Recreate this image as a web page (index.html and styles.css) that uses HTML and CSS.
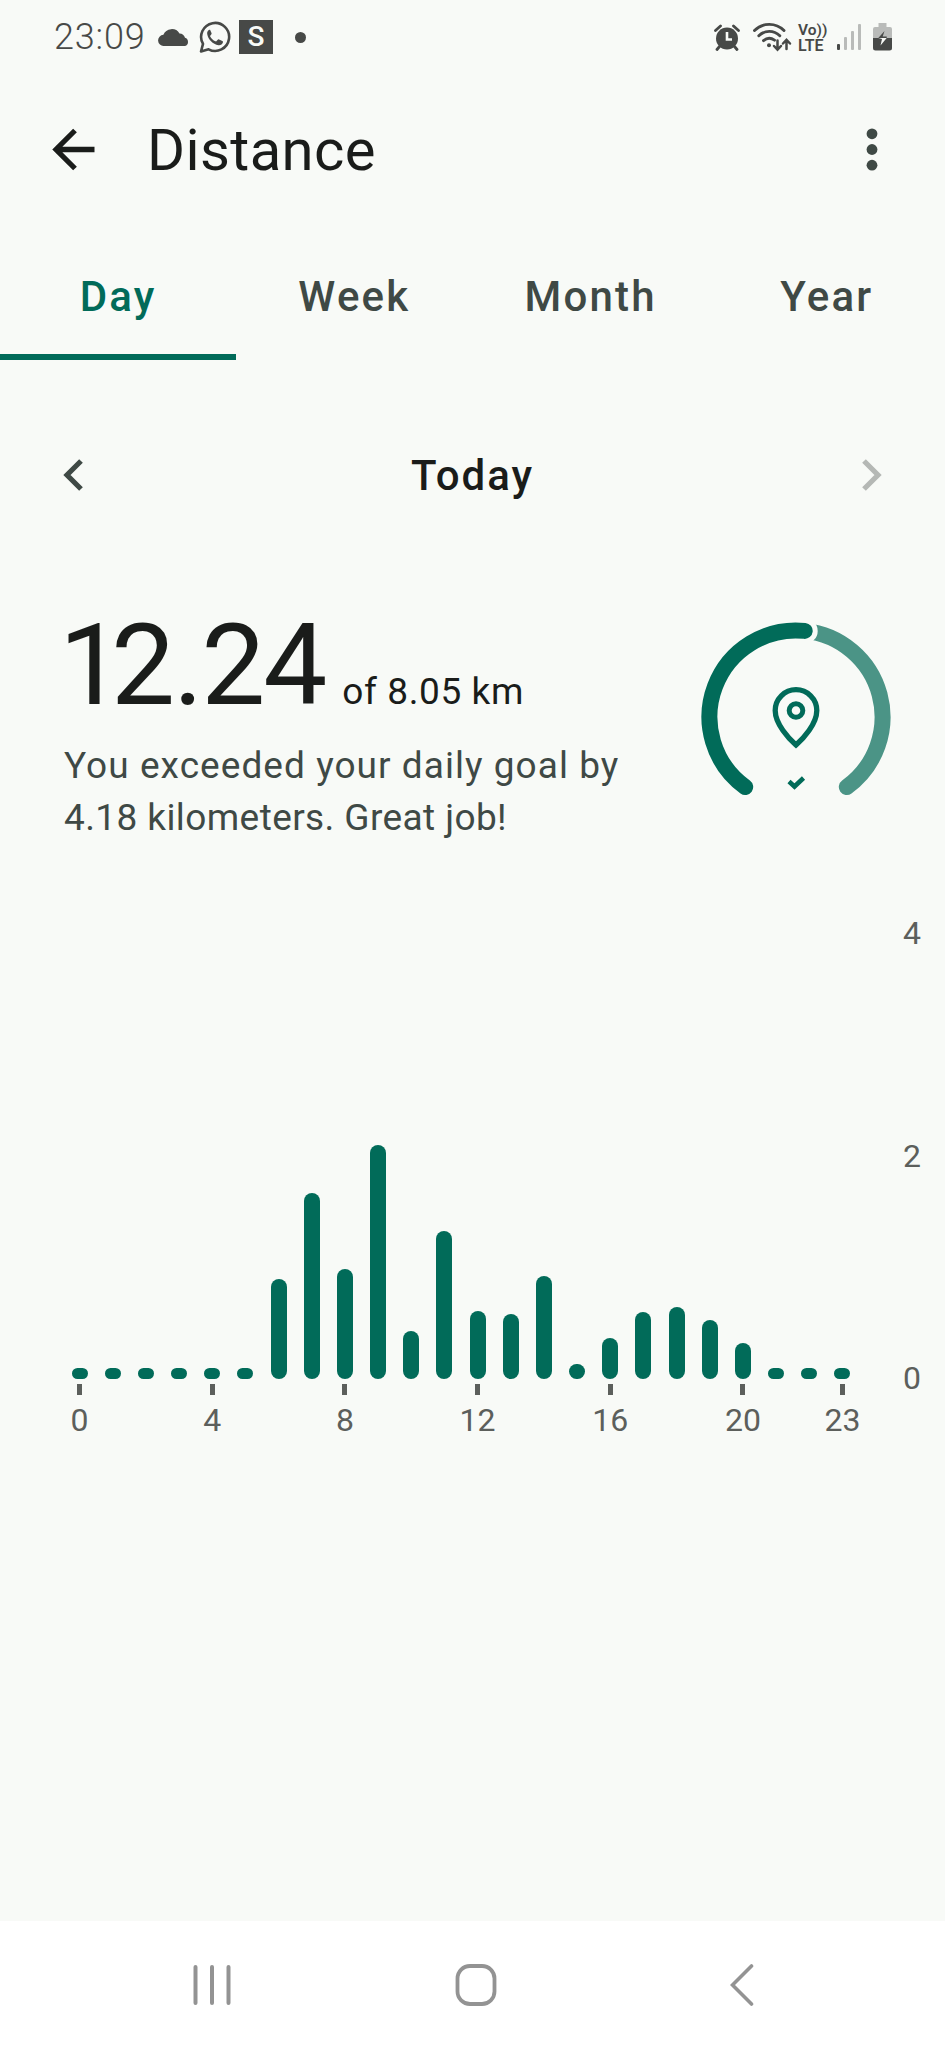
FILE: index.html
```html
<!DOCTYPE html>
<html lang="en">
<head>
    <meta charset="UTF-8">
    <meta name="viewport" content="width=device-width, initial-scale=1.0">
    <title>Distance</title>
    <link rel="stylesheet" href="styles.css">
</head>
<body>
    <div class="status-bar">
        <span class="clock">23:09</span>
        <svg class="icon-cloud" width="31" height="18" viewBox="0 0 31 18">
            <path d="M6 18a5.6 5.6 0 0 1-.6-11.200A9 9 0 0 1 21.500 5.500 6 6 0 0 1 27 9.800 4.300 4.300 0 0 1 27 18z" fill="#474947"/>
        </svg>
        <svg class="icon-whatsapp" width="32" height="32" viewBox="0 0 32 32">
            <path d="M2 30.500l2-7.600A14 14 0 1 1 9.600 28.300z" fill="none" stroke="#474947" stroke-width="2.600" stroke-linejoin="round"/>
            <path d="M10.500 8.800c-1.500.5-2.600 2.200-2.300 4.200.9 5.500 5.600 10.300 11.300 11.200 2 .3 4-1 4.400-2.700.2-.9 0-1.300-.6-1.600l-3.200-1.500c-.6-.3-1-.1-1.400.4l-1.100 1.300c-.3.4-.7.4-1.200.2-2.300-1-4.100-2.700-5.200-4.800-.2-.5-.1-.8.200-1.100l1-1.200c.3-.4.3-.7.100-1.200l-1.200-2.700c-.2-.5-.4-.6-.8-.5z" fill="#474947"/>
        </svg>
        <span class="app-badge">S</span>
        <span class="more-dot"></span>

        <div class="status-right">
            <svg width="26" height="27" viewBox="0 0 26 27">
                <circle cx="13" cy="14.500" r="11" fill="#474947"/>
                <path d="M1.500 6.500l5-4.500M24.500 6.500l-5-4.500M5.500 22.500l-2.500 3M20.500 22.500l2.500 3" stroke="#474947" stroke-width="2.800" stroke-linecap="round"/>
                <path d="M13 8v7.500h5" fill="none" stroke="#f8faf7" stroke-width="2.600"/>
            </svg>
            <svg class="icon-wifi" width="40" height="30" viewBox="0 0 40 30">
                <g fill="none" stroke="#474947" stroke-width="2.900" stroke-linecap="round">
                    <path d="M2.500 8.500c8-8.200 21.500-8.200 29.500 0M6.800 13.800c6-5.900 15-5.900 21 0M11.500 18.600c3.500-3 7.500-3 11-.5"/>
                    <path d="M25.500 18.500v8.500M22 24l3.500 3.600 3.500-3.600M34.500 27v-8.500M31 21.500l3.500-3.600 3.500 3.600" stroke-width="2.500"/>
                </g>
                <circle cx="17" cy="23.200" r="2" fill="#474947"/>
            </svg>
            <div class="volte"><span>Vo))</span><span class="lte">LTE</span></div>
            <svg class="icon-signal" width="24" height="26" viewBox="0 0 24 26">
                <rect x="0" y="20" width="3" height="6" rx="1" fill="#474947"/>
                <g fill="#b9bbb9">
                    <rect x="7" y="13" width="3" height="13" rx="1"/>
                    <rect x="14" y="7" width="3" height="19" rx="1"/>
                    <rect x="21" y="0" width="3" height="26" rx="1"/>
                </g>
            </svg>
            <svg class="icon-battery" width="19" height="28" viewBox="0 0 19 28">
                <path d="M5.500 0h8v4h3.500a2 2 0 0 1 2 2v9H0V6a2 2 0 0 1 2-2h3.500z" fill="#b9bbb9"/>
                <path d="M0 15h19v10a2.500 2.500 0 0 1-2.500 2.500h-14A2.500 2.500 0 0 1 0 25z" fill="#474947"/>
                <path d="M11.500 8L5.300 15h8.400V13.500h-4z" fill="#474947"/>
                <path d="M5.300 15h8.400L7.500 22.500l1.500-6.500z" fill="#f8faf7"/>
            </svg>
        </div>
    </div>

    <header class="app-bar">
        <svg width="43" height="43" viewBox="0 0 43 43" fill="none" stroke="#1a1c1a" stroke-width="5.300">
            <path d="M42.500 21.500H5M23 2.500l-19 19 19 19"/>
        </svg>
        <h1>Distance</h1>
        <svg class="menu-icon" width="12" height="43" viewBox="0 0 12 43" fill="#3f4945">
            <circle cx="6" cy="5.800" r="5.400"/>
            <circle cx="6" cy="21.500" r="5.400"/>
            <circle cx="6" cy="37.200" r="5.400"/>
        </svg>
    </header>

    <nav class="tabs">
        <a class="tab active">Day</a>
        <a class="tab">Week</a>
        <a class="tab">Month</a>
        <a class="tab">Year</a>
    </nav>

    <div class="date-row">
        <svg width="20" height="32" viewBox="0 0 20 32" fill="none" stroke="#3f4945" stroke-width="5.200">
            <path d="M18 2L4 16l14 14"/>
        </svg>
        <span>Today</span>
        <svg width="20" height="32" viewBox="0 0 20 32" fill="none" stroke="#b5b8b5" stroke-width="5.200">
            <path d="M2 2l14 14L2 30"/>
        </svg>
    </div>

    <section class="summary">
        <div class="summary-text">
            <div class="total"><span class="one">1</span>2.24<span class="goal">of 8.05 km</span></div>
            <p class="line-one">You exceeded your daily goal by</p>
            <p class="line-two">4.18 kilometers. Great job!</p>
        </div>
        <svg class="gauge" width="190" height="190" viewBox="-95 -95 190 190" fill="none" stroke-linecap="round">
            <path d="M8.700 -86.100A86.500 86.500 0 0 1 50.800 70" stroke="#4b9486" stroke-width="16"/>
            <circle cx="8.700" cy="-86.100" r="13" fill="#f8faf7"/>
            <path d="M-50.800 70A86.500 86.500 0 0 1 8.700 -86.100" stroke="#016b59" stroke-width="16"/>
            <path d="M0 28C-7 22-20.800 7-20.800-6.500a20.800 20.800 0 0 1 41.600 0C20.800 7 7 22 0 28z" stroke="#016b59" stroke-width="5.300"/>
            <circle cx="0" cy="-6.500" r="6.800" stroke="#016b59" stroke-width="5"/>
            <path d="M-7 64.500l5.500 5 9-8.500" stroke="#016b59" stroke-width="4.600" stroke-linecap="butt"/>
        </svg>
    </section>

    <section class="chart">
        <div class="plot" id="plot"></div>
        <div class="y-axis">
            <span>4</span>
            <span>2</span>
            <span>0</span>
        </div>
    </section>

    <footer class="system-nav">
        <svg width="38" height="42" viewBox="0 0 38 42" stroke="#939393" stroke-width="4" stroke-linecap="round">
            <path d="M2.500 3v36M19 3v36M35.500 3v36"/>
        </svg>
        <svg class="nav-home" width="42" height="42" viewBox="0 0 42 42" fill="none" stroke="#939393" stroke-width="3.800">
            <rect x="2.500" y="2" width="37" height="38" rx="12.500"/>
        </svg>
        <svg width="24" height="42" viewBox="0 0 24 42" fill="none" stroke="#939393" stroke-width="3.600" stroke-linecap="round">
            <path d="M21.500 2L2.500 21l19 19"/>
        </svg>
    </footer>

    <script>
        // Kilometers per hour of the day
        var hours = [0, 0, 0, 0, 0, 0, 0.9, 1.675, 0.987, 2.1, 0.434, 1.331, 0.609, 0.582, 0.924, 0.137, 0.369, 0.603, 0.648, 0.528, 0.324, 0, 0, 0];
        var labels = [0, 4, 8, 12, 16, 20, 23];
        var pxPerKm = 111.2;
        var plot = document.getElementById("plot");

        hours.forEach(function (km, hour) {
            var column = document.createElement("div");
            column.className = "column";

            var bar = document.createElement("div");
            bar.className = "bar";
            bar.style.height = Math.max(km * pxPerKm, 11) + "px";
            column.appendChild(bar);

            var label = document.createElement("div");
            label.className = "hour";
            if (labels.includes(hour)) {
                label.classList.add("tick");
                label.textContent = hour;
            }
            column.appendChild(label);
            plot.appendChild(column);
        });
    </script>
</body>
</html>
```

FILE: styles.css
```css
body {
    font-family: Roboto, "Liberation Sans", sans-serif;
    background-color: #f8faf7;
    color: #1a1c1a;
    margin: 0;
    height: 2048px;
    display: flex;
    flex-direction: column;
    overflow: hidden;
}

svg {
    display: block;
    flex-shrink: 0;
}

.status-bar {
    height: 74px;
    padding: 0 53px 0 54px;
    box-sizing: border-box;
    display: flex;
    align-items: center;
    color: #474947;
}

.clock {
    font-size: 36px;
    font-weight: 300;
    letter-spacing: 0.8px;
    width: 104px;
}

.icon-whatsapp {
    margin-left: 10px;
}

.app-badge {
    width: 34px;
    height: 34px;
    margin-left: 8px;
    background-color: #474947;
    color: #f8faf7;
    font-size: 28px;
    line-height: 34px;
    text-align: center;
    font-weight: 500;
}

.more-dot {
    width: 11px;
    height: 11px;
    margin-left: 22px;
    border-radius: 50%;
    background-color: #474947;
}

.status-right {
    margin-left: auto;
    display: flex;
    align-items: center;
}

.icon-wifi {
    margin-left: 12px;
}

.volte {
    width: 28px;
    margin-left: 6px;
    margin-top: 2px;
    display: flex;
    flex-direction: column;
    font-size: 15.5px;
    line-height: 15px;
    font-weight: 600;
    white-space: nowrap;
}

.lte {
    font-size: 16px;
}

.icon-signal {
    margin-left: 11px;
}

.icon-battery {
    margin-left: 12px;
}

.app-bar {
    height: 151px;
    padding: 0 67px 0 52px;
    display: flex;
    align-items: center;
}

.app-bar h1 {
    margin: 0 0 0 52px;
    font-size: 58px;
    font-weight: 400;
    letter-spacing: 0.4px;
}

.menu-icon {
    margin-left: auto;
}

.tabs {
    height: 135px;
    display: flex;
}

.tab {
    flex: 1;
    box-sizing: border-box;
    border-bottom: 6px solid transparent;
    text-align: center;
    font-size: 42px;
    line-height: 143px;
    font-weight: 500;
    letter-spacing: 2.2px;
    color: #3f4945;
}

.tab.active {
    color: #016b59;
    border-color: #016b59;
}

.date-row {
    height: 80px;
    margin-top: 75px;
    padding: 0 63px;
    display: flex;
    align-items: center;
    justify-content: space-between;
    font-size: 42px;
    font-weight: 500;
    letter-spacing: 2px;
}

.summary {
    height: 240px;
    margin-top: 85px;
    padding: 0 54px 0 64px;
    display: flex;
    justify-content: space-between;
    align-items: flex-start;
}

.gauge {
    margin-top: 22px;
}

.total {
    height: 140px;
    font-size: 114px;
    line-height: 131px;
    letter-spacing: -2px;
    white-space: nowrap;
}

.one {
    margin-left: -5px;
    letter-spacing: -12px;
}

.goal {
    margin-left: 17px;
    font-size: 37px;
    letter-spacing: 0.6px;
}

.summary p {
    margin: 0;
    font-size: 37px;
    line-height: 52px;
    color: #3f4945;
    white-space: nowrap;
}

.summary .line-one {
    letter-spacing: 1.05px;
}

.summary .line-two {
    letter-spacing: 0.4px;
}

.chart {
    height: 520px;
    margin-top: 74px;
    padding-left: 63px;
    display: flex;
}

.plot {
    width: 796px;
    height: 522px;
    display: grid;
    grid-template-columns: repeat(24, minmax(0, 1fr));
    align-items: end;
}

.column {
    display: flex;
    flex-direction: column;
    align-items: center;
}

.bar {
    width: 16px;
    border-radius: 8px;
    background-color: #016b59;
}

.hour {
    height: 52px;
    margin-top: 5px;
    font-size: 32px;
    line-height: 38px;
    color: #5c5f5c;
}

.tick::before {
    content: "";
    display: block;
    width: 5px;
    height: 11px;
    margin: 0 auto 6px;
    background-color: #5c5f5c;
}

.y-axis {
    margin-left: 44px;
    font-size: 32px;
    color: #5c5f5c;
}

.y-axis span {
    display: block;
    height: 222.500px;
    line-height: 38px;
}

.system-nav {
    height: 127px;
    margin-top: auto;
    padding: 0 191px 0 193px;
    background-color: #fff;
    display: flex;
    align-items: center;
    justify-content: space-between;
}

.nav-home {
    margin-right: 10px;
}
```
